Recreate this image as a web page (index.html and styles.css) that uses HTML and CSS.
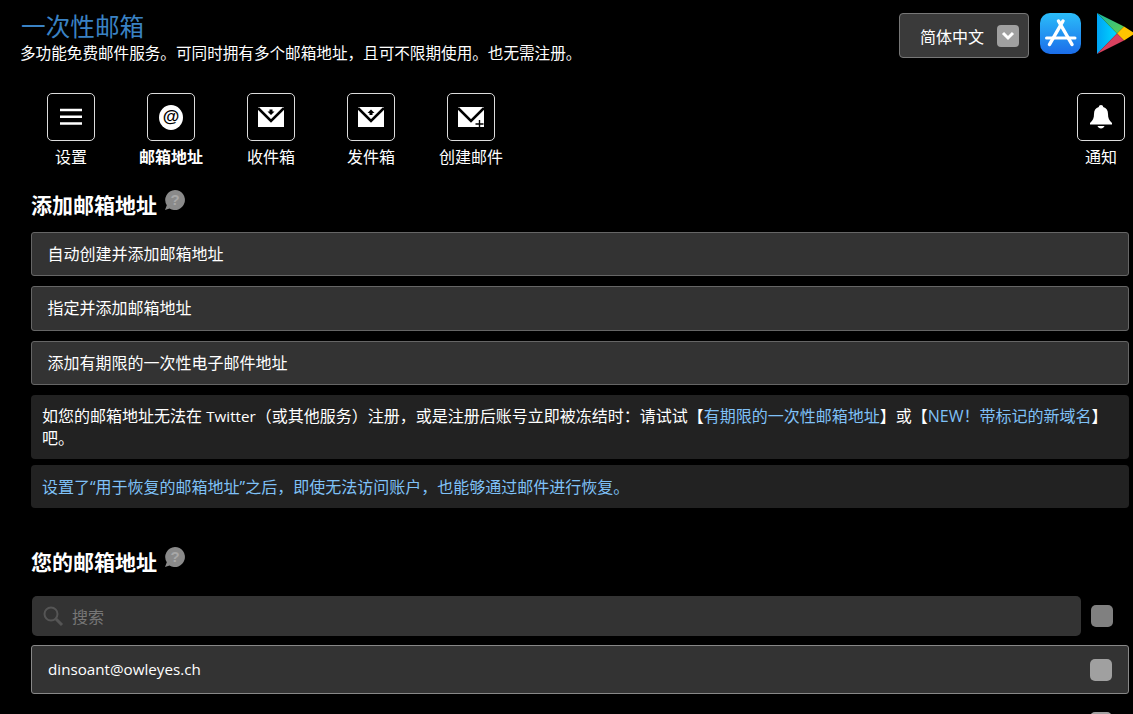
FILE: index.html
```html
<!DOCTYPE html>
<html>
<head>
  <meta charset="utf-8">
  <title>一次性邮箱</title>
  <link rel="stylesheet" href="styles.css">
</head>
<body>

<div class="top">
  <div class="brand">
    <h1>一次性邮箱</h1>
    <p>多功能免费邮件服务。可同时拥有多个邮箱地址，且可不限期使用。也无需注册。</p>
  </div>
  <div class="top-right">
    <div class="lang">
      <span>简体中文</span>
      <span class="lang-arrow">
        <svg width="14" height="10" viewBox="0 0 14 10"><path d="M2 2l5 5 5-5" fill="none" stroke="#fff" stroke-width="3"/></svg>
      </span>
    </div>
    <svg class="app-icon" width="41" height="41" viewBox="0 0 41 41">
      <defs>
        <linearGradient id="appblue" x1="0" y1="0" x2="0" y2="1">
          <stop offset="0" stop-color="#2bbdf9"/>
          <stop offset="1" stop-color="#1b6dea"/>
        </linearGradient>
      </defs>
      <rect width="41" height="41" rx="10" fill="url(#appblue)"/>
      <g fill="none" stroke="#fff" stroke-linecap="round">
        <path d="M23 8L9.500 31.500M18.500 8L32 31.500" stroke-width="3.500"/>
        <path d="M6.500 25H35" stroke-width="3"/>
      </g>
    </svg>
    <svg class="play-icon" width="37" height="41" viewBox="0 0 37 41">
      <defs>
        <linearGradient id="pblue" x1="0" y1="0" x2="1" y2="0">
          <stop offset="0" stop-color="#00a3f5"/>
          <stop offset="1" stop-color="#00d9ff"/>
        </linearGradient>
        <linearGradient id="pgreen" x1="0" y1="0" x2="1" y2="1">
          <stop offset="0" stop-color="#16b5a0"/>
          <stop offset="1" stop-color="#62d04f"/>
        </linearGradient>
      </defs>
      <path d="M0 0L20 20.500L0 41Z" fill="url(#pblue)"/>
      <path d="M0 0L27 13.500L20 20.500Z" fill="url(#pgreen)"/>
      <path d="M27 13.500L38 20.500L27 27.500L20 20.500Z" fill="#ffc400"/>
      <path d="M0 41L20 20.500L27 27.500Z" fill="#d9415f"/>
    </svg>
  </div>
</div>

<div class="nav">
  <div class="nav-item">
    <div class="nav-box">
      <svg width="48" height="48" viewBox="0 0 48 48"><path d="M13 15.700H35v2.600H13zM13 22.500H35v2.600H13zM13 29.200H35v2.600H13z" fill="#fff"/></svg>
    </div>
    <span>设置</span>
  </div>
  <div class="nav-item active">
    <div class="nav-box"><span class="at-mark">@</span></div>
    <span>邮箱地址</span>
  </div>
  <div class="nav-item">
    <div class="nav-box">
      <svg width="48" height="48" viewBox="0 0 48 48">
        <path d="M11 14H37V34H11z" fill="#fff"/>
        <path d="M11 15L24 28L37 15" fill="none" stroke="#000" stroke-width="2.500"/>
        <path d="M22.500 16.500H25.500V18.500H27.500L24 22L20.500 18.500H22.500z" fill="#000"/>
      </svg>
    </div>
    <span>收件箱</span>
  </div>
  <div class="nav-item">
    <div class="nav-box">
      <svg width="48" height="48" viewBox="0 0 48 48">
        <path d="M11 14H37V34H11z" fill="#fff"/>
        <path d="M11 15L24 28L37 15" fill="none" stroke="#000" stroke-width="2.500"/>
        <path d="M24 16.500L27.500 20H25.500V22H22.500V20H20.500z" fill="#000"/>
      </svg>
    </div>
    <span>发件箱</span>
  </div>
  <div class="nav-item">
    <div class="nav-box">
      <svg width="48" height="48" viewBox="0 0 48 48">
        <path d="M11 14H37V34H11z" fill="#fff"/>
        <path d="M11 15L24 28L37 15" fill="none" stroke="#000" stroke-width="2.500"/>
        <path d="M31.800 27h1.400v3.300h3.300v1.400h-3.300V35h-1.400v-3.300h-3.300v-1.400h3.300z" fill="#000"/>
      </svg>
    </div>
    <span>创建邮件</span>
  </div>
  <div class="nav-item nav-right">
    <div class="nav-box">
      <svg width="48" height="48" viewBox="0 0 48 48">
        <path d="M24 12c1.300 0 2.200.9 2.200 2 3.300.9 4.800 3.500 4.800 7 0 4 1 6 4 9v1.500H13V30c3-3 4-5 4-9 0-3.500 1.500-6.100 4.800-7 0-1.100.9-2 2.200-2z" fill="#fff"/>
        <path d="M20.500 33h7c-.5 1.600-2 2.500-3.500 2.500s-3-.9-3.500-2.500z" fill="#fff"/>
      </svg>
    </div>
    <span>通知</span>
  </div>
</div>

<div class="content">
  <h2 class="first">添加邮箱地址
    <svg class="help" width="23" height="23" viewBox="0 0 23 23">
      <path d="M12 1a10 10 0 1 1-5.500 18.400L2 21l1.800-4.700A10 10 0 0 1 12 1z" fill="#8a8a8a"/>
      <text x="12" y="16" text-anchor="middle" class="help-mark">?</text>
    </svg>
  </h2>

  <div class="row">自动创建并添加邮箱地址</div>
  <div class="row">指定并添加邮箱地址</div>
  <div class="row">添加有期限的一次性电子邮件地址</div>

  <div class="note note-big">如您的邮箱地址无法在 <span class="en">Twitter</span>（或其他服务）注册，或是注册后账号立即被冻结时：请试试【<a>有期限的一次性邮箱地址</a>】或【<a>NEW！带标记的新域名</a>】吧。</div>
  <div class="note note-small"><a>设置了“用于恢复的邮箱地址”之后，即使无法访问账户，也能够通过邮件进行恢复。</a></div>

  <h2 class="second">您的邮箱地址
    <svg class="help" width="23" height="23" viewBox="0 0 23 23">
      <path d="M12 1a10 10 0 1 1-5.500 18.400L2 21l1.800-4.700A10 10 0 0 1 12 1z" fill="#8a8a8a"/>
      <text x="12" y="16" text-anchor="middle" class="help-mark">?</text>
    </svg>
  </h2>

  <div class="search-line">
    <div class="search">
      <svg width="22" height="22" viewBox="0 0 22 22"><circle cx="9" cy="9" r="6.500" fill="none" stroke="#555" stroke-width="2"/><path d="M14 14l6 6" stroke="#555" stroke-width="3"/></svg>
      <span>搜索</span>
    </div>
    <div class="check check-dim"></div>
  </div>

  <div class="row mail-row">
    <span class="en mail-text">dinsoant@owleyes.ch</span>
    <div class="check"></div>
  </div>
  <div class="mail-next">
    <div class="check"></div>
  </div>
</div>

</body>
</html>
```

FILE: styles.css
```css
* {
  margin: 0;
  padding: 0;
  box-sizing: border-box;
}

html, body {
  height: 714px;
  overflow: hidden;
}

body {
  background-color: #000;
  color: #fff;
  font-family: "Open Sans", "Noto Sans CJK SC", sans-serif;
  font-size: 16px;
}

a {
  color: #7fc1f7;
}

.en {
  font-size: 15.2px;
}

/* header */
.top {
  display: flex;
  justify-content: space-between;
  height: 93px;
  padding: 13px 0 0 20px;
}

.brand h1 {
  color: #3a82c4;
  font-size: 24.64px;
  font-weight: 400;
  line-height: 28px;
  margin-left: 1px;
}

.brand p {
  font-size: 15.6px;
  line-height: 24px;
}

.top-right {
  display: flex;
  align-items: flex-start;
  flex-shrink: 0;
}

.lang {
  display: flex;
  align-items: center;
  justify-content: space-between;
  width: 130px;
  height: 45px;
  padding: 0 9px 0 20px;
  background-color: #3a3a3a;
  border: 1px solid #777;
  border-radius: 4px;
}

.lang-arrow {
  display: flex;
  align-items: center;
  justify-content: center;
  width: 22px;
  height: 22px;
  background-color: #a0a0a0;
  border-radius: 4px;
}

.app-icon {
  margin-left: 11px;
}

.play-icon {
  margin: 0 -1px 0 16px;
}

/* nav */
.nav {
  display: flex;
  padding-left: 21px;
}

.nav-item {
  display: flex;
  flex-direction: column;
  align-items: center;
  width: 100px;
  line-height: 24px;
}

.nav-item.active {
  font-weight: 700;
}

.nav-right {
  width: 64px;
  margin-left: auto;
}

.nav-box {
  display: flex;
  align-items: center;
  justify-content: center;
  width: 48px;
  height: 48px;
  margin-bottom: 4px;
  border: 1px solid #ddd;
  border-radius: 5px;
}

.nav-box svg {
  flex-shrink: 0;
}

.at-mark {
  width: 24px;
  height: 25px;
  background-color: #fff;
  border-radius: 50%;
  color: #000;
  font-family: "Liberation Sans", sans-serif;
  font-size: 17px;
  font-weight: 700;
  line-height: 24px;
  text-align: center;
}

/* content */
.content {
  padding: 0 4px 0 31px;
}

h2 {
  display: flex;
  align-items: flex-start;
  gap: 6px;
  font-size: 21px;
  font-weight: 700;
  line-height: 30px;
}

h2.first {
  margin-top: 21px;
  margin-bottom: 12px;
}

h2.second {
  margin-top: 39px;
  margin-bottom: 19px;
}

.help {
  margin-top: -1px;
}

.help-mark {
  fill: #a8a8a8;
  font-family: "Liberation Sans", sans-serif;
  font-size: 15px;
  font-weight: 700;
}

.row {
  height: 44.4px;
  margin-bottom: 10px;
  padding: 0 15.5px;
  background-color: #333;
  border: 1px solid #666;
  border-radius: 3px;
  line-height: 42.4px;
}

.note {
  background-color: #222;
  border-radius: 4px;
  padding: 10px 11px;
  line-height: 22px;
}

.note-big {
  margin-bottom: 6px;
}

.note-small {
  padding: 10.5px 11px;
}

.search-line {
  display: flex;
  align-items: center;
  gap: 10px;
  margin-bottom: 9px;
  padding-right: 16px;
  margin-left: 1px;
}

.search {
  display: flex;
  align-items: center;
  flex: 1;
  gap: 8px;
  height: 40px;
  padding-left: 10px;
  background-color: #333;
  border-radius: 5px;
  color: #777;
}

.check {
  flex-shrink: 0;
  width: 22px;
  height: 22px;
  background-color: #a0a0a0;
  border-radius: 5px;
}

.check-dim {
  background-color: #808080;
}

.mail-row {
  display: flex;
  align-items: center;
  justify-content: space-between;
  height: 49px;
  padding: 0 16px;
  border-color: #888;
  line-height: 24px;
}

.mail-text {
  margin-bottom: 2px;
}

.mail-next {
  display: flex;
  justify-content: flex-end;
  padding: 8px 17px 0 0;
}
```
